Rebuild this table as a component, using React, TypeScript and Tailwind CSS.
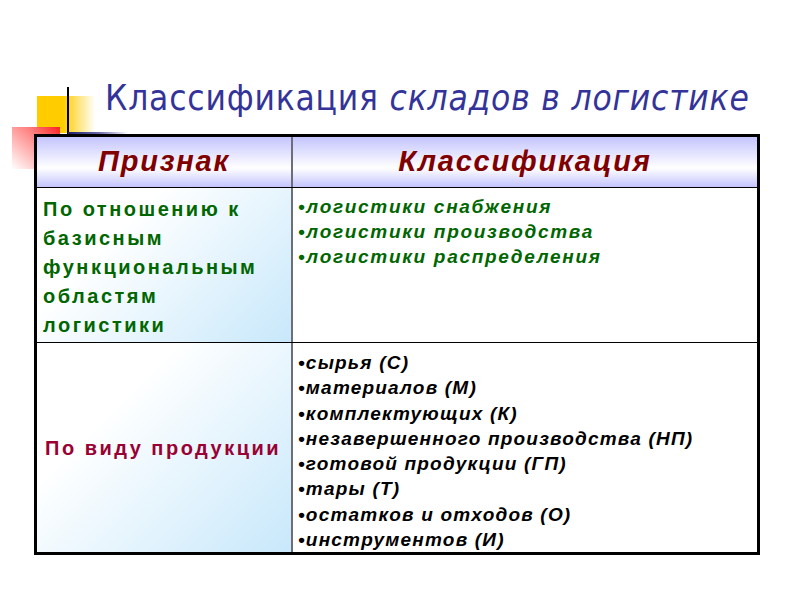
import React from 'react';

const rowOne = ['логистики снабжения', 'логистики производства', 'логистики распределения'];

const rowTwo = [
  'сырья (С)',
  'материалов (М)',
  'комплектующих (К)',
  'незавершенного производства (НП)',
  'готовой продукции (ГП)',
  'тары (Т)',
  'остатков и отходов (О)',
  'инструментов (И)',
];

const Decoration = () => (
  <div className="absolute left-0 top-0 h-[180px] w-[140px]">
    {/* yellow square fading right */}
    <div className="absolute left-[37px] top-[96px] h-[37px] w-[58px] bg-[linear-gradient(to_right,#ffcc00_0%,#ffcc00_45%,#ffffff_100%)]" />
    {/* red square fading down-left */}
    <div className="absolute left-[12px] top-[127px] h-[42px] w-[48px] bg-[linear-gradient(to_bottom_left,#ff2020_0%,#ff8080_35%,#ffffff_100%)]" />
    {/* vertical line */}
    <div className="absolute left-[67px] top-[87px] h-[47px] w-[2px] bg-black" />
    {/* horizontal fading line */}
    <div className="absolute left-[68px] top-[132px] h-[3px] w-[60px] bg-[linear-gradient(to_right,#222266_0%,#6666aa_50%,#ffffff_100%)]" />
  </div>
);

export default function App() {
  return (
    <div className="relative h-[600px] w-[800px] overflow-hidden bg-white font-['Liberation_Sans',Arial,sans-serif]">
      <Decoration />
      <div className="relative pl-[105px] pt-[78px]">
        <h1 className="whitespace-nowrap font-['DejaVu_Sans_Condensed','DejaVu_Sans',sans-serif] text-[35px] leading-[40px] tracking-[0.8px] text-[#333399]">
          Классификация <i>складов в логистике</i>
        </h1>
      </div>

      <div className="relative ml-[34px] mt-[16px] w-[726px] border-[3px] border-black">
        {/* header */}
        <div className="flex h-[51px] border-b border-black bg-[linear-gradient(to_bottom,#c4c4ff_0%,#ffffff_62%,#c4c4ff_100%)] text-[29px] font-bold italic tracking-[1.8px] text-[#800000]">
          <div className="flex w-[256px] items-center justify-center border-r-2 border-[#6e6e78]">
            Признак
          </div>
          <div className="flex flex-1 items-center justify-center">
            Классификация
          </div>
        </div>

        {/* row 1 */}
        <div className="flex h-[155px] border-b border-black">
          <div className="w-[256px] border-r-2 border-[#6e6e78] bg-[linear-gradient(135deg,#ffffff_30%,#c8e8fb_100%)] px-[6px] pt-[7px] text-[20px] font-bold leading-[29px] tracking-[2.5px] text-[#006600]">
            По отношению к базисным функциональным областям логистики
          </div>
          <div className="flex-1 bg-white px-[5px] pt-[6px] text-[19px] font-bold italic leading-[25px] tracking-[1.7px] text-[#006600]">
            {rowOne.map((t) => (
              <div key={t}>•{t}</div>
            ))}
          </div>
        </div>

        {/* row 2 */}
        <div className="flex h-[209px]">
          <div className="flex w-[256px] items-center whitespace-nowrap border-r-2 border-[#6e6e78] bg-[linear-gradient(135deg,#ffffff_30%,#c8e8fb_100%)] px-[8px] text-[20px] font-bold tracking-[2.5px] text-[#990033]">
            По виду продукции
          </div>
          <div className="flex-1 bg-white px-[5px] pt-[7px] text-[19px] font-bold italic leading-[25.3px] tracking-[1.2px] text-black">
            {rowTwo.map((t) => (
              <div key={t}>•{t}</div>
            ))}
          </div>
        </div>
      </div>
    </div>
  );
}
